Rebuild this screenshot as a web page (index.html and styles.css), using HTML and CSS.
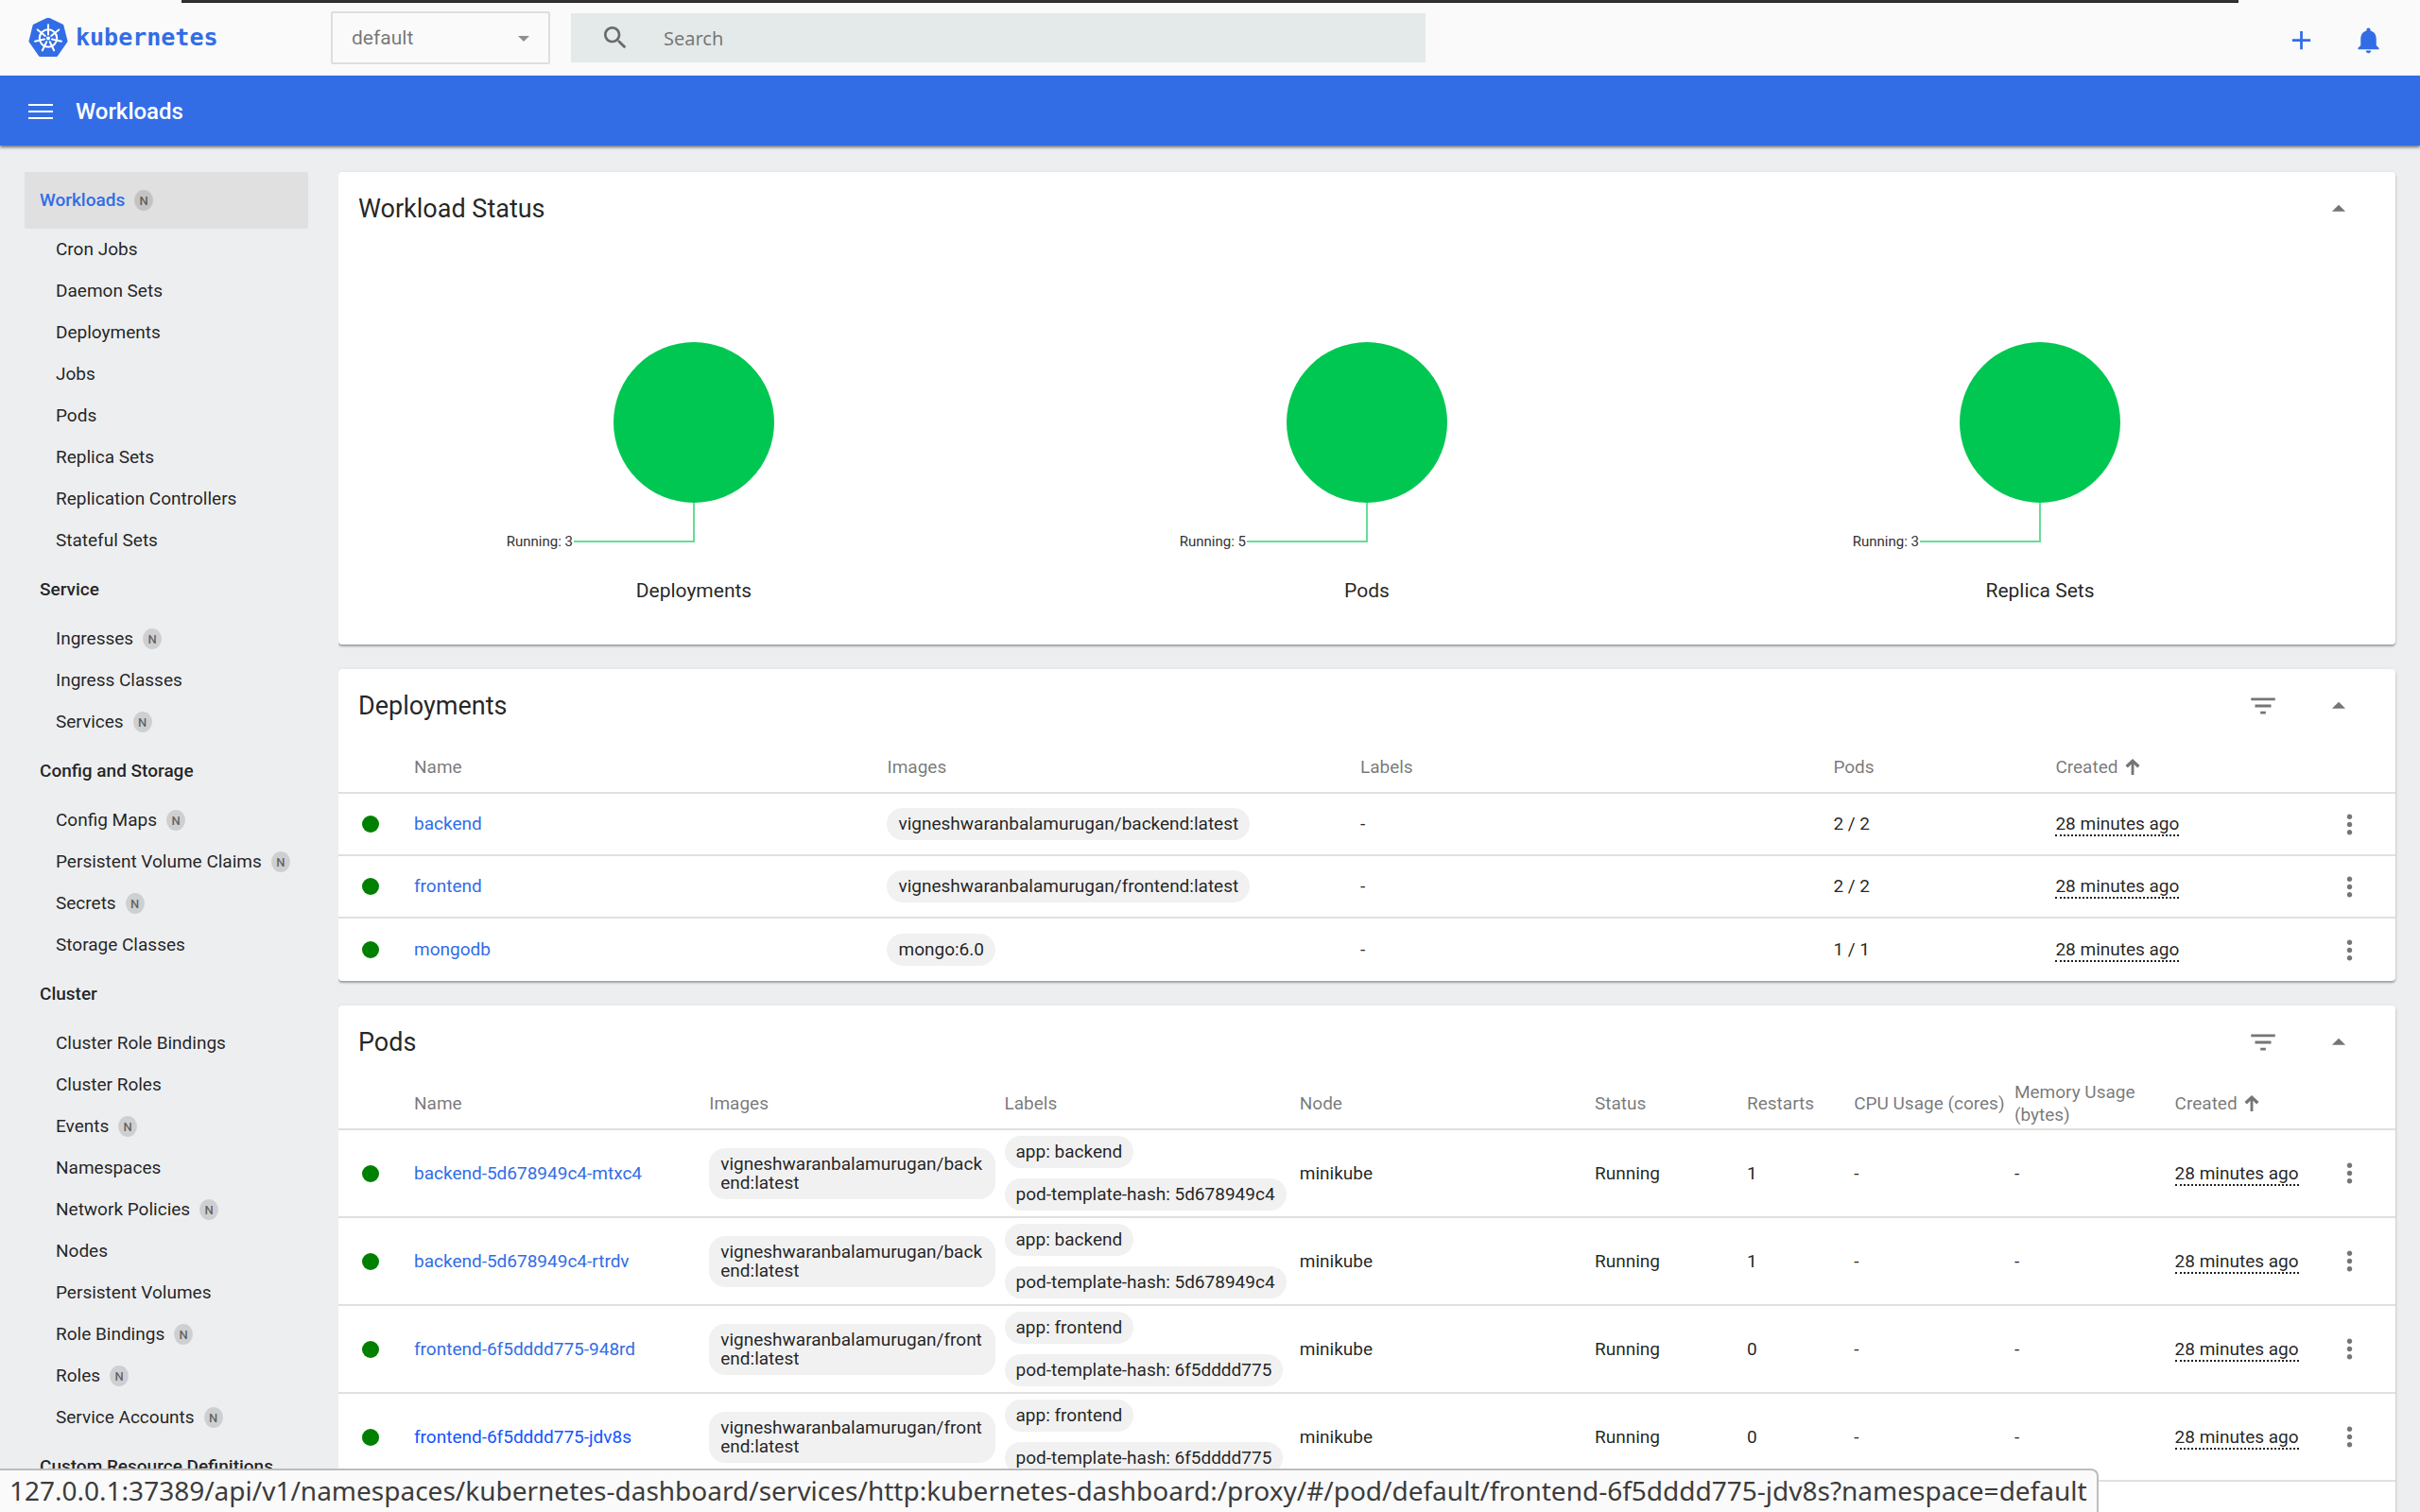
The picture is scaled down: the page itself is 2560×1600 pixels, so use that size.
FILE: index.html
```html
<!DOCTYPE html>
<html lang="en">
<head>
  <meta charset="UTF-8">
  <meta name="viewport" content="width=device-width, initial-scale=1.0">
  <title>Kubernetes Dashboard</title>
  <link rel="stylesheet" href="styles.css">
</head>
<body>
  <!-- shared icons -->
  <svg class="sprite" aria-hidden="true">
    <symbol id="icon-filter" viewBox="0 0 24 24"><path d="M10 18h4v-2h-4v2zM3 6v2h18V6H3zm3 7h12v-2H6v2z"/></symbol>
    <symbol id="icon-collapse" viewBox="0 0 24 24"><path d="M7 14l5-5 5 5z"/></symbol>
    <symbol id="icon-more" viewBox="0 0 24 24"><path d="M12 8c1.1 0 2-.9 2-2s-.9-2-2-2-2 .9-2 2 .9 2 2 2zm0 2c-1.1 0-2 .9-2 2s.9 2 2 2 2-.9 2-2-.9-2-2-2zm0 6c-1.1 0-2 .9-2 2s.9 2 2 2 2-.9 2-2-.9-2-2-2z"/></symbol>
    <symbol id="icon-sort" viewBox="0 0 16 18"><path d="M6.500 18V6L2.500 10 0 7.500 8 0l8 7.500-2.500 2.500L9.500 6v12z"/></symbol>
  </svg>

  <div class="window-edge"></div>

  <header class="topbar">
    <a class="logo" href="#">
      <svg class="logo-mark" viewBox="0 0 40 41" aria-hidden="true">
        <path d="M20 1 L34.500 8 L38.500 24 L28.500 38.500 H11.500 L1.500 24 L5.500 8 Z" fill="#326de6" stroke="#326de6" stroke-width="3" stroke-linejoin="round"/>
        <g fill="none" stroke="#fff" stroke-width="2" stroke-linecap="round">
          <circle cx="20" cy="21" r="9"/>
          <path d="M20 17V7M23.100 18.500L31 12.200M23.900 21.900L33.600 24.100M21.700 24.600L26 33.600M18.300 24.600L14 33.600M16.100 21.900L6.400 24.100M16.900 18.500L9 12.200"/>
        </g>
        <circle cx="20" cy="21" r="2" fill="#fff"/>
      </svg>
      <span>kubernetes</span>
    </a>
    <div class="namespace">
      <select aria-label="Namespace">
        <option>default</option>
      </select>
    </div>
    <div class="search">
      <svg viewBox="0 0 24 24" aria-hidden="true"><path d="M15.500 14h-.79l-.28-.27C15.410 12.590 16 11.110 16 9.500 16 5.910 13.090 3 9.500 3S3 5.910 3 9.500 5.910 16 9.500 16c1.610 0 3.090-.59 4.230-1.570l.27.28v.79l5 4.990L20.490 19l-4.990-5zm-6 0C7.010 14 5 11.990 5 9.500S7.010 5 9.500 5 14 7.010 14 9.500 11.990 14 9.500 14z"/></svg>
      <input type="search" placeholder="Search" aria-label="Search">
    </div>
    <div class="actions">
      <button type="button" aria-label="Create new resource"><svg viewBox="0 0 24 24"><path d="M19 13h-6v6h-2v-6H5v-2h6V5h2v6h6v2z"/></svg></button>
      <button type="button" aria-label="Notifications"><svg viewBox="0 0 24 24"><path d="M12 22c1.100 0 2-.9 2-2h-4c0 1.100.89 2 2 2zm6-6v-5c0-3.070-1.640-5.640-4.500-6.320V4c0-.83-.67-1.500-1.500-1.500s-1.500.67-1.500 1.500v.68C7.630 5.360 6 7.920 6 11v5l-2 2v1h16v-1l-2-2z"/></svg></button>
    </div>
  </header>

  <div class="titlebar">
    <button type="button" aria-label="Toggle navigation"><svg viewBox="0 0 26 16"><path d="M0 0h26v2H0zM0 7h26v2H0zM0 14h26v2H0z"/></svg></button>
    <h1>Workloads</h1>
  </div>

  <div class="layout">
    <nav class="sidebar">
      <a class="section active" href="#">Workloads <span class="ns">N</span></a>
      <a href="#">Cron Jobs</a>
      <a href="#">Daemon Sets</a>
      <a href="#">Deployments</a>
      <a href="#">Jobs</a>
      <a href="#">Pods</a>
      <a href="#">Replica Sets</a>
      <a href="#">Replication Controllers</a>
      <a href="#">Stateful Sets</a>
      <a class="section" href="#">Service</a>
      <a href="#">Ingresses <span class="ns">N</span></a>
      <a href="#">Ingress Classes</a>
      <a href="#">Services <span class="ns">N</span></a>
      <a class="section" href="#">Config and Storage</a>
      <a href="#">Config Maps <span class="ns">N</span></a>
      <a href="#">Persistent Volume Claims <span class="ns">N</span></a>
      <a href="#">Secrets <span class="ns">N</span></a>
      <a href="#">Storage Classes</a>
      <a class="section" href="#">Cluster</a>
      <a href="#">Cluster Role Bindings</a>
      <a href="#">Cluster Roles</a>
      <a href="#">Events <span class="ns">N</span></a>
      <a href="#">Namespaces</a>
      <a href="#">Network Policies <span class="ns">N</span></a>
      <a href="#">Nodes</a>
      <a href="#">Persistent Volumes</a>
      <a href="#">Role Bindings <span class="ns">N</span></a>
      <a href="#">Roles <span class="ns">N</span></a>
      <a href="#">Service Accounts <span class="ns">N</span></a>
      <a class="section" href="#">Custom Resource Definitions</a>
    </nav>

    <main class="content">
      <section class="card">
        <div class="card-header">
          <h2>Workload Status</h2>
          <button class="collapse" type="button" aria-label="Collapse"><svg><use href="#icon-collapse"/></svg></button>
        </div>
        <div class="charts">
          <figure>
            <svg viewBox="0 0 400 353">
              <circle cx="200" cy="187" r="85"/>
              <path d="M200 272V313H73"/>
              <text x="72" y="318">Running: 3</text>
            </svg>
            <figcaption>Deployments</figcaption>
          </figure>
          <figure>
            <svg viewBox="0 0 400 353">
              <circle cx="200" cy="187" r="85"/>
              <path d="M200 272V313H73"/>
              <text x="72" y="318">Running: 5</text>
            </svg>
            <figcaption>Pods</figcaption>
          </figure>
          <figure>
            <svg viewBox="0 0 400 353">
              <circle cx="200" cy="187" r="85"/>
              <path d="M200 272V313H73"/>
              <text x="72" y="318">Running: 3</text>
            </svg>
            <figcaption>Replica Sets</figcaption>
          </figure>
        </div>
      </section>

      <section class="card">
        <div class="card-header">
          <h2>Deployments</h2>
          <button type="button" aria-label="Filter"><svg><use href="#icon-filter"/></svg></button>
          <button class="collapse" type="button" aria-label="Collapse"><svg><use href="#icon-collapse"/></svg></button>
        </div>
        <table class="deployments">
          <colgroup>
            <col class="col-status"><col class="col-wide"><col class="col-wide"><col class="col-wide"><col class="col-pods"><col><col class="col-menu">
          </colgroup>
          <thead>
            <tr>
              <th></th><th>Name</th><th>Images</th><th>Labels</th><th>Pods</th>
              <th>Created <svg class="sort"><use href="#icon-sort"/></svg></th><th></th>
            </tr>
          </thead>
          <tbody>
            <tr>
              <td><span class="dot"></span></td>
              <td><a href="#">backend</a></td>
              <td><span class="chip">vigneshwaranbalamurugan/backend:latest</span></td>
              <td>-</td>
              <td>2 / 2</td>
              <td><span class="age">28 minutes ago</span></td>
              <td><button type="button" aria-label="Actions"><svg><use href="#icon-more"/></svg></button></td>
            </tr>
            <tr>
              <td><span class="dot"></span></td>
              <td><a href="#">frontend</a></td>
              <td><span class="chip">vigneshwaranbalamurugan/frontend:latest</span></td>
              <td>-</td>
              <td>2 / 2</td>
              <td><span class="age">28 minutes ago</span></td>
              <td><button type="button" aria-label="Actions"><svg><use href="#icon-more"/></svg></button></td>
            </tr>
            <tr>
              <td><span class="dot"></span></td>
              <td><a href="#">mongodb</a></td>
              <td><span class="chip">mongo:6.0</span></td>
              <td>-</td>
              <td>1 / 1</td>
              <td><span class="age">28 minutes ago</span></td>
              <td><button type="button" aria-label="Actions"><svg><use href="#icon-more"/></svg></button></td>
            </tr>
          </tbody>
        </table>
      </section>

      <section class="card last">
        <div class="card-header">
          <h2>Pods</h2>
          <button type="button" aria-label="Filter"><svg><use href="#icon-filter"/></svg></button>
          <button class="collapse" type="button" aria-label="Collapse"><svg><use href="#icon-collapse"/></svg></button>
        </div>
        <table class="pods">
          <colgroup>
            <col class="col-status"><col class="col-mid"><col class="col-mid"><col class="col-mid"><col class="col-mid"><col class="col-state"><col class="col-restarts"><col class="col-usage"><col class="col-usage"><col><col class="col-menu">
          </colgroup>
          <thead>
            <tr>
              <th></th><th>Name</th><th>Images</th><th>Labels</th><th>Node</th><th>Status</th><th>Restarts</th>
              <th>CPU Usage (cores)</th><th>Memory Usage<br>(bytes)</th>
              <th>Created <svg class="sort"><use href="#icon-sort"/></svg></th><th></th>
            </tr>
          </thead>
          <tbody>
            <tr>
              <td><span class="dot"></span></td>
              <td><a href="#">backend-5d678949c4-mtxc4</a></td>
              <td><span class="chip">vigneshwaranbalamurugan/backend:latest</span></td>
              <td><div class="chips"><span class="chip">app: backend</span><span class="chip">pod-template-hash: 5d678949c4</span></div></td>
              <td>minikube</td>
              <td>Running</td>
              <td>1</td>
              <td>-</td>
              <td>-</td>
              <td><span class="age">28 minutes ago</span></td>
              <td><button type="button" aria-label="Actions"><svg><use href="#icon-more"/></svg></button></td>
            </tr>
            <tr>
              <td><span class="dot"></span></td>
              <td><a href="#">backend-5d678949c4-rtrdv</a></td>
              <td><span class="chip">vigneshwaranbalamurugan/backend:latest</span></td>
              <td><div class="chips"><span class="chip">app: backend</span><span class="chip">pod-template-hash: 5d678949c4</span></div></td>
              <td>minikube</td>
              <td>Running</td>
              <td>1</td>
              <td>-</td>
              <td>-</td>
              <td><span class="age">28 minutes ago</span></td>
              <td><button type="button" aria-label="Actions"><svg><use href="#icon-more"/></svg></button></td>
            </tr>
            <tr>
              <td><span class="dot"></span></td>
              <td><a href="#">frontend-6f5dddd775-948rd</a></td>
              <td><span class="chip">vigneshwaranbalamurugan/frontend:latest</span></td>
              <td><div class="chips"><span class="chip">app: frontend</span><span class="chip">pod-template-hash: 6f5dddd775</span></div></td>
              <td>minikube</td>
              <td>Running</td>
              <td>0</td>
              <td>-</td>
              <td>-</td>
              <td><span class="age">28 minutes ago</span></td>
              <td><button type="button" aria-label="Actions"><svg><use href="#icon-more"/></svg></button></td>
            </tr>
            <tr>
              <td><span class="dot"></span></td>
              <td><a class="hovered" href="#">frontend-6f5dddd775-jdv8s</a></td>
              <td><span class="chip">vigneshwaranbalamurugan/frontend:latest</span></td>
              <td><div class="chips"><span class="chip">app: frontend</span><span class="chip">pod-template-hash: 6f5dddd775</span></div></td>
              <td>minikube</td>
              <td>Running</td>
              <td>0</td>
              <td>-</td>
              <td>-</td>
              <td><span class="age">28 minutes ago</span></td>
              <td><button type="button" aria-label="Actions"><svg><use href="#icon-more"/></svg></button></td>
            </tr>
          </tbody>
        </table>
      </section>
    </main>
  </div>

  <div class="link-status">127.0.0.1:37389/api/v1/namespaces/kubernetes-dashboard/services/http:kubernetes-dashboard:/proxy/#/pod/default/frontend-6f5dddd775-jdv8s?namespace=default</div>
</body>
</html>
```
FILE: styles.css
```css
* {
  box-sizing: border-box;
}

body {
  margin: 0;
  height: 100vh;
  display: flex;
  flex-direction: column;
  overflow: hidden;
  background-color: #edeef0;
  color: rgba(0, 0, 0, 0.87);
  font-family: Roboto, sans-serif;
  font-size: 19px;
  line-height: 24px;
}

h1, h2, figure {
  margin: 0;
}

a {
  color: inherit;
  text-decoration: none;
}

button {
  display: flex;
  align-items: center;
  justify-content: center;
  padding: 0;
  border: none;
  background: none;
  color: inherit;
  cursor: pointer;
}

svg {
  fill: currentColor;
}

.sprite {
  display: none;
}

/* strip of the window behind the browser */
.window-edge {
  position: absolute;
  top: 0;
  left: 7.5%;
  right: 7.5%;
  height: 3px;
  background-color: #333;
  border-bottom: 1px solid #1e1e1e;
}

/* top bar */
.topbar {
  flex: none;
  display: flex;
  align-items: center;
  height: 80px;
  padding: 0 30px;
  background-color: #fafafa;
}

.logo {
  display: flex;
  align-items: center;
  gap: 8px;
  width: 320px;
  color: #326de6;
  font-family: "DejaVu Sans Mono", monospace;
  font-size: 25px;
  font-weight: bold;
}

.logo-mark {
  width: 42px;
  height: 42px;
}

.namespace {
  position: relative;
  width: 232px;
  margin-right: 22px;
}

.namespace::after {
  content: "";
  position: absolute;
  top: 26px;
  right: 22px;
  border: 6px solid transparent;
  border-top-color: #8f8f8f;
  border-bottom: none;
}

.namespace select {
  width: 100%;
  height: 56px;
  padding: 0 20px;
  appearance: none;
  border: 2px solid #dedede;
  border-radius: 2px;
  background: none;
  color: rgba(0, 0, 0, 0.54);
  font-family: inherit;
  font-size: 21px;
}

.search {
  display: flex;
  align-items: center;
  gap: 35px;
  width: 904px;
  height: 52px;
  padding: 0 31px;
  background-color: #e4e9e9;
  color: rgba(0, 0, 0, 0.54);
}

.search svg {
  flex: none;
  width: 32px;
  height: 32px;
}

.search input {
  flex: 1;
  padding: 0;
  border: none;
  background: none;
  font-family: "Noto Sans", sans-serif;
  font-size: 20px;
}

.search input::placeholder {
  color: rgba(0, 0, 0, 0.5);
}

.actions {
  display: flex;
  gap: 38px;
  margin-left: auto;
  padding: 4px 8px 0 0;
  color: #326de6;
}

.actions svg {
  width: 33px;
  height: 33px;
}

.titlebar {
  flex: none;
  display: flex;
  align-items: center;
  gap: 24px;
  height: 74px;
  padding: 2px 30px 0;
  background-color: #326de6;
  color: #fff;
  box-shadow: 0 2px 3px rgba(0, 0, 0, 0.5);
}

.titlebar svg {
  width: 26px;
  height: 16px;
}

.titlebar h1 {
  font-size: 24px;
  font-weight: 500;
}

.layout {
  flex: 1;
  min-height: 0;
  display: flex;
}

/* sidebar */
.sidebar {
  flex: none;
  width: 358px;
  padding: 28px 32px 0 26px;
  overflow: hidden;
}

.sidebar a {
  display: flex;
  align-items: center;
  gap: 10px;
  height: 44px;
  padding-left: 33px;
}

.sidebar .section {
  height: 60px;
  padding-left: 16px;
  font-weight: 500;
}

.sidebar .active {
  border-radius: 2px;
  background-color: #e0e0e0;
  color: #326de6;
}

.ns {
  width: 20px;
  height: 22px;
  border-radius: 50%;
  background-color: rgba(0, 0, 0, 0.13);
  color: rgba(0, 0, 0, 0.54);
  font-size: 13px;
  font-weight: 500;
  text-align: center;
}

/* cards */
.content {
  flex: 1;
  min-width: 0;
  display: flex;
  flex-direction: column;
  gap: 26px;
  padding: 28px 26px 0 0;
  overflow: hidden;
}

.card {
  flex: none;
  border-radius: 4px;
  background-color: #fff;
  box-shadow: 0 2px 2px rgba(0, 0, 0, 0.28), 0 1px 4px rgba(0, 0, 0, 0.1);
}

.card.last {
  flex: 1 0 auto;
  border-radius: 4px 4px 0 0;
}

.card-header {
  display: flex;
  align-items: center;
  gap: 46px;
  height: 78px;
  padding: 0 43px 0 21px;
  color: rgba(0, 0, 0, 0.54);
}

.card-header h2 {
  flex: 1;
  color: rgba(0, 0, 0, 0.87);
  font-size: 27px;
  font-weight: 400;
}

.card-header svg {
  width: 34px;
  height: 34px;
}

.charts {
  display: flex;
  padding: 0 20px 45px;
}

.charts figure {
  flex: 1;
  text-align: center;
  font-size: 21px;
}

.charts svg {
  display: block;
  width: 400px;
  margin: 0 auto;
}

.charts circle {
  fill: #00c752;
}

.charts path {
  fill: none;
  stroke: #00c752;
  stroke-opacity: 0.6;
  stroke-width: 2;
}

.charts text {
  fill: #333;
  font-size: 15px;
  text-anchor: end;
}

/* tables */
table {
  width: 100%;
  table-layout: fixed;
  border-spacing: 0;
}

th, td {
  padding: 0;
  text-align: left;
  border-bottom: 2px solid #e0e0e0;
}

th {
  height: 54px;
  color: rgba(0, 0, 0, 0.54);
  font-weight: 400;
  white-space: nowrap;
}

.deployments td {
  height: 66px;
}

.deployments tr:last-child td {
  border-bottom: none;
}

.pods td {
  height: 93px;
}

td:first-child {
  padding-left: 25px;
}

td a {
  color: #326de6;
}

td a.hovered {
  color: #1254ff;
}

td svg {
  width: 33px;
  height: 33px;
  color: rgba(0, 0, 0, 0.54);
}

td button {
  margin: 0 auto;
}

.col-status { width: 80px; }
.col-wide { width: 23%; }
.col-pods { width: 10.8%; }
.col-mid { width: 14.35%; }
.col-state { width: 7.4%; }
.col-restarts { width: 5.2%; }
.col-usage { width: 7.8%; }
.col-menu { width: 97px; }

.sort {
  width: 16px;
  height: 17px;
  margin-left: 3px;
  vertical-align: -2px;
}

.dot {
  display: block;
  width: 18px;
  height: 18px;
  border-radius: 50%;
  background-color: green;
}

.chip {
  display: inline-block;
  margin-right: 10px;
  padding: 7px 12px;
  border-radius: 17px;
  background-color: #f1f1f1;
  line-height: 20px;
  word-break: break-all;
  vertical-align: middle;
}

.chips {
  display: flex;
  flex-direction: column;
  align-items: flex-start;
  gap: 11px;
}

.chips .chip {
  margin-right: 0;
}

.age {
  border-bottom: 2px dotted rgba(0, 0, 0, 0.87);
  line-height: 20px;
}

/* link preview shown by the browser */
.link-status {
  position: fixed;
  left: 0;
  bottom: 0;
  height: 46px;
  padding: 0 10px;
  border: 2px solid #bdbdbd;
  border-width: 2px 2px 0 0;
  border-radius: 0 8px 0 0;
  background-color: #fafafa;
  color: #3c3c3c;
  font-family: "Noto Sans", sans-serif;
  font-size: 28px;
  line-height: 42px;
  white-space: nowrap;
}
```
